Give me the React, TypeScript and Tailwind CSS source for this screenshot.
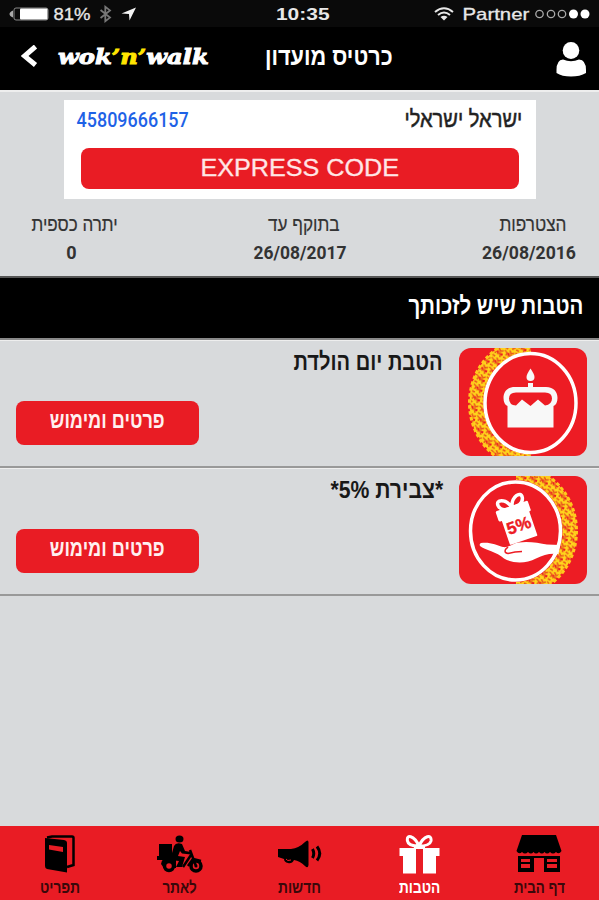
import React, { useLayoutEffect, useRef, useState } from "react";
import clsx from "clsx";

interface FitTextProps {
  width: number;
  className?: string;
  children: React.ReactNode;
}

// Condenses or stretches one line of text to a fixed width
const FitText: React.FC<FitTextProps> = ({ width, className, children }) => {
  const ref = useRef<HTMLSpanElement>(null);
  const [scale, setScale] = useState(1);

  useLayoutEffect(() => {
    if (ref.current) setScale(width / ref.current.offsetWidth);
  }, [width]);

  return (
    <span className="flex shrink-0 justify-center" style={{ width }} dir="ltr">
      <span className="shrink-0" style={{ transform: `scaleX(${scale})` }}>
        <span ref={ref} dir="auto" className={clsx("block whitespace-nowrap", className)}>
          {children}
        </span>
      </span>
    </span>
  );
};

const StatusBar = () => (
  <div className="flex h-[27px] items-center bg-[#0a0a0a] pt-px pr-[9px] pl-[9px] text-[#e8e8e8]">
    <div className="flex w-[267px] items-center">
      <svg width="40" height="14" viewBox="0 0 40 14">
        <path d="M4 3.500Q0.500 5 0.500 7T4 10.500Z" fill="#aaa" />
        <rect x="5" y="1" width="34" height="12" rx="2" fill="none" stroke="#888" />
        <rect x="11" y="1.500" width="27.500" height="11" rx="1" fill="#fff" />
      </svg>
      <div className="ml-[5px]">
        <FitText width={37} className="text-[17px] leading-[27px] [-webkit-text-stroke:0.3px_currentColor]">81%</FitText>
      </div>
      <svg width="13" height="18" viewBox="0 0 13 20" className="ml-2" fill="none" stroke="#777" strokeWidth="2">
        <path d="M1 5.500L11.500 14L6.300 18V2L11.500 6L1 14.500" />
      </svg>
      <svg width="16" height="14" viewBox="0 0 16 14" className="ml-[9px]">
        <path d="M15 0.500L0.500 6.500L8 7L8.500 13.500Z" fill="#f4f4f4" />
      </svg>
    </div>
    <FitText width={53} className="text-[17px] leading-[27px] font-bold">10:35</FitText>
    <div className="ml-auto flex items-center">
      <svg width="20" height="14" viewBox="0 0 20 14" fill="none" stroke="#e8e8e8" strokeWidth="2">
        <path d="M1 5Q10 -2.500 19 5M4 8Q10 3 16 8" />
        <path d="M6.500 10Q10 7.500 13.500 10L10 13.500Z" fill="#e8e8e8" stroke="none" />
      </svg>
      <div className="ml-2">
        <FitText width={67} className="text-[17px] leading-[27px] [-webkit-text-stroke:0.3px_currentColor]">Partner</FitText>
      </div>
      <svg width="56" height="12" viewBox="0 0 56 12" className="ml-[5px]">
        <g fill="none" stroke="#aaa" strokeWidth="1.300">
          <circle cx="5.500" cy="6" r="3.700" />
          <circle cx="17" cy="6" r="3.700" />
          <circle cx="28" cy="6" r="3.700" />
        </g>
        <circle cx="39.500" cy="6" r="4.500" fill="#fff" />
        <circle cx="51" cy="6" r="4.500" fill="#fff" />
      </svg>
    </div>
  </div>
);

const Header = () => (
  <header className="flex h-[63px] items-start bg-black pr-[12px] pl-[21px] text-white">
    <svg width="17" height="22" viewBox="0 0 17 22" className="mt-[18px]">
      <path d="M14.500 1.500L3.500 11L14.500 20" fill="none" stroke="#fff" strokeWidth="5" />
    </svg>
    <div className="ml-[20px] mt-[14px]">
      <FitText width={151} className="font-['DejaVu_Serif'] text-[21px] leading-[31px] font-black italic [-webkit-text-stroke:1px_currentColor]">
        wok<span className="text-[#ffe500]">’n’</span>walk
      </FitText>
    </div>
    <div className="ml-[56px] mt-[14px]">
      <FitText width={128} className="text-[25px] leading-[31px] font-bold">כרטיס מועדון</FitText>
    </div>
    <svg width="31" height="35" viewBox="0 0 31 35" className="ml-auto mt-[15px]" fill="#fff">
      <ellipse cx="15" cy="8.500" rx="8.300" ry="8.500" />
      <path d="M0.500 28Q0.500 18 7 17.500Q15 21 23 17.500Q30 18 30 28V31Q24 34.500 15 34.500T0.500 31Z" />
    </svg>
  </header>
);

const DETAILS = [
  { label: "הצטרפות", labelWidth: 67, value: "26/08/2016", valueWidth: 94, box: "w-[94px]", shift: "pl-[7px]", valueShift: "" },
  { label: "בתוקף עד", labelWidth: 72, value: "26/08/2017", valueWidth: 93, box: "w-[94px]", shift: "pl-[8px]", valueShift: "" },
  { label: "יתרה כספית", labelWidth: 86, value: "0", valueWidth: 10, box: "w-[86px]", shift: "", valueShift: "pr-[7px]" },
];

const MemberCard = () => (
  <section className="h-[186px] border-t-2 border-[#eeeeee] pt-2">
    <div className="mx-auto h-[99px] w-[472px] bg-white px-[13px] pt-[4px]">
      <div className="flex h-[44px] justify-between text-[#222]">
        <FitText width={118} className="text-[23px] leading-[31px] [-webkit-text-stroke:0.5px_currentColor]">ישראל ישראלי</FitText>
        <FitText width={112} className="font-['Roboto'] text-[21px] leading-[33px] font-medium text-[#1e62e6]">45809666157</FitText>
      </div>
      <button className="mx-1 flex h-[41px] w-[438px] items-center justify-center rounded-lg bg-[#e91c24] text-[#ffe6e6]">
        <FitText width={199} className="text-[23px] leading-[41px] [-webkit-text-stroke:0.3px_currentColor]">EXPRESS CODE</FitText>
      </button>
    </div>
    <div className="flex justify-between pt-[11px] pr-[23px] pl-[32px] text-[#333]">
      {DETAILS.map((d) => (
        <div key={d.label} className={clsx("flex flex-col items-center", d.box)}>
          <div className={d.shift}>
            <FitText width={d.labelWidth} className="text-[20px] leading-[28px] [-webkit-text-stroke:0.2px_currentColor]">{d.label}</FitText>
          </div>
          <div className={d.valueShift}>
            <FitText width={d.valueWidth} className="font-['Roboto'] text-[18px] leading-[30px] font-bold">{d.value}</FitText>
          </div>
        </div>
      ))}
    </div>
  </section>
);

const Ornament = ({ id, cx }: { id: string; cx: number }) => (
  <>
    <defs>
      <pattern id={id} width="11" height="10" patternUnits="userSpaceOnUse" patternTransform="rotate(14)">
        <rect width="11" height="10" fill="#ffd51c" />
        <path d="M1 1L4 3L3 6M6 0L8 3L11 2M5 6L8 5L9 9M1 8L4 9" fill="none" stroke="#e8541c" strokeWidth="1.500" />
        <circle cx="5.500" cy="4" r="1.200" fill="#ed1c24" />
        <circle cx="10" cy="6" r="1.300" fill="#ed1c24" />
      </pattern>
    </defs>
    <ellipse cx={cx} cy="55" rx="54" ry="58" fill="none" stroke={`url(#${id})`} strokeWidth="14" />
    <ellipse cx={cx} cy="55" rx="61" ry="65" fill="none" stroke="#ffc91c" strokeWidth="3" strokeDasharray="3.500 2.500" />
  </>
);

const BirthdayIcon = () => (
  <svg width="128" height="108" viewBox="0 0 128 108" className="rounded-xl bg-[#ed1c24]">
    <clipPath id="left-half">
      <rect width="72" height="108" />
    </clipPath>
    <g clipPath="url(#left-half)">
      <Ornament id="lace-left" cx={71.5} />
    </g>
    <ellipse cx="71.500" cy="55" rx="45.500" ry="49.500" fill="#ed1c24" stroke="#fff" strokeWidth="3.500" />
    <g fill="#f8f8f8">
      <path d="M71.500 20.500Q67.500 26.500 67.500 29Q67.500 33 71.500 33T75.500 29Q75.500 26.500 71.500 20.500Z" />
      <rect x="69" y="35" width="5" height="6" />
      <path d="M56 39H87C95 39 98.500 44 98.500 50C98.500 54 97 57 94.500 58V79.500H48.500V58C46 57 44.500 54 44.500 50C44.500 44 48 39 56 39Z" />
    </g>
    <path d="M57 44.500H86Q93 44.500 93 50.500Q93 56.500 86 57.500L79 51.500L71.500 58L63 51.500L57 57.500Q50 57 50 50.500Q50 44.500 57 44.500Z" fill="#ed1c24" />
  </svg>
);

const CashbackIcon = () => (
  <svg width="128" height="108" viewBox="0 0 128 108" className="rounded-xl bg-[#ed1c24]">
    <clipPath id="right-half">
      <rect x="57" width="71" height="108" />
    </clipPath>
    <g clipPath="url(#right-half)">
      <Ornament id="lace-right" cx={56.5} />
    </g>
    <ellipse cx="56.500" cy="55" rx="45" ry="49" fill="#ed1c24" stroke="#fff" strokeWidth="3.500" />
    <g transform="translate(2.500 2.500) rotate(-19 56 45)">
      <path d="M56 28C53 17 42.500 15 43.500 22C44.500 27.500 50 29 56 28C62 29 68 27.500 69 22C70 15 59 17 56 28Z" fill="none" stroke="#fff" strokeWidth="3.500" />
      <rect x="39" y="26.500" width="34" height="11" rx="1.500" fill="#fff" />
      <rect x="42" y="35" width="29" height="28" rx="1" fill="#fff" />
      <text x="56.500" y="53" direction="ltr" textAnchor="middle" fontFamily="Liberation Sans" fontSize="17" fontWeight="bold" fill="#ed1c24" stroke="#ed1c24" strokeWidth="0.400">5%</text>
    </g>
    <path d="M22 67C30 65.500 38 69 44 71C50 72 54 67 60 66.500C69 65 80 67 88 68.500L101 69L99.500 78C90 77 85 79 77 82.500C67 88 53 87.500 45 82.500C38 76 26 74 21 70Q20 68 22 67Z" fill="#fff" />
    <path d="M63 75.500Q56 75.500 49 77.500Q45 77 46.500 73.500L49 71" fill="none" stroke="#ed1c24" strokeWidth="1.500" />
  </svg>
);

const BENEFITS = [
  { title: "הטבת יום הולדת", titleWidth: 149, icon: <BirthdayIcon /> },
  { title: "*צבירת 5%*", titleWidth: 113, icon: <CashbackIcon /> },
];

const Benefits = () => (
  <section>
    <h2 className="flex h-[64px] items-start border-t-2 border-b-2 border-t-[#555] border-b-[#888] bg-black pt-[12px] pr-4 text-white">
      <FitText width={175} className="text-[25px] leading-[31px] font-bold">הטבות שיש לזכותך</FitText>
    </h2>
    {BENEFITS.map((b) => (
      <div key={b.title} className="flex h-[128px] border-t border-b-2 border-t-[#eee] border-b-[#999] pt-[7px] pr-3">
        {b.icon}
        <div className="mr-[16px]">
          <FitText width={b.titleWidth} className="text-[24px] leading-[27px] font-bold text-[#181818]">{b.title}</FitText>
        </div>
        <button className="mt-[53px] mr-auto ml-4 flex h-[44px] w-[183px] justify-center rounded-lg bg-[#e91c24] pt-[4px] pl-[2px] text-[#fff0f0]">
          <FitText width={115} className="-ml-[3px] text-[23px] leading-[31px] font-bold">פרטים ומימוש</FitText>
        </button>
      </div>
    ))}
  </section>
);

const StoreIcon = () => (
  <svg width="46" height="38" viewBox="0 0 46 38">
    <path d="M6 0H40L45.500 16Q43 20 40 17Q37 20 34 17Q31 20 28.500 17Q26 20 23 17Q20 20 17.500 17Q15 20 12 17Q9 20 6 17Q3 20 0.500 16Z" />
    <path fillRule="evenodd" d="M2 21H44V37H28V23H18V37H2ZM5 24V27H14V24ZM5 29V33H14V29ZM31 24V27H41V24ZM31 29V33H41V29Z" />
  </svg>
);

const GiftIcon = () => (
  <svg width="41" height="39" viewBox="0 0 41 39" fill="#fff">
    <path d="M20 11C15 0 7 -1 8.500 6C9 10 15 11 20 11C25 11 31 10 32 6C33 -1 25 0 20 11Z" fill="none" stroke="#fff" strokeWidth="3" />
    <path d="M0.500 13H17V38.500H4V21H0.500ZM24 13H40.500V21H37V38.500H24Z" />
    <path d="M15 11H26V14H15Z" />
  </svg>
);

const NewsIcon = () => (
  <svg width="46" height="38" viewBox="0 0 46 38">
    <path d="M28 7Q31 4 31.500 7V30Q31 34 28 31Q23 26 17 25Q15 29 11 28Q7 27 7 24L1 22V14L14 14Q22 13 28 7Z" />
    <path d="M9 24Q10 26.500 14 25" stroke="#e91c24" fill="none" />
    <path d="M35.500 14Q38 18.500 35.500 23M40 11.500Q45.500 18.500 40 25.500" fill="none" stroke="#000" strokeWidth="3" />
  </svg>
);

const DeliveryIcon = () => (
  <svg width="46" height="38" viewBox="0 0 46 38">
    <ellipse cx="22.500" cy="4" rx="4" ry="3.500" />
    <path d="M2 9H15V22H2ZM0 21H16V25H0Z" />
    <path d="M17 11Q19 7 25 9L28 16L34 17V19.500L25 18.500L23 16L21 21L28 22L25 32H19L22 26L13 25Z" />
    <path d="M4 29Q5 22 13 22L19 25V33H7Z" />
    <circle cx="12" cy="31" r="4.500" fill="#e91c24" stroke="#000" strokeWidth="3.500" />
    <circle cx="39" cy="31" r="5" fill="#e91c24" stroke="#000" strokeWidth="3.500" />
    <path d="M33 15L39 31M34 20L26 32M31 31L36 24L44 26" fill="none" stroke="#000" strokeWidth="2.500" />
    <circle cx="39" cy="31" r="1.500" />
  </svg>
);

const MenuIcon = () => (
  <svg width="32" height="38" viewBox="0 0 32 38">
    <path d="M3 2.500L8 1.500H28Q29.500 1.500 29.500 3V30L23 32" fill="none" stroke="#000" strokeWidth="2.500" />
    <path d="M1 3L20 5Q23 5.500 23 8V37.500L3 34Q1 33.500 1 31Z" />
    <path d="M5 10L19 12V17L5 14.500Z" fill="#e91c24" />
  </svg>
);

const NAV = [
  { label: "דף הבית", width: 51, icon: <StoreIcon /> },
  { label: "הטבות", width: 41, icon: <GiftIcon />, active: true },
  { label: "חדשות", width: 43, icon: <NewsIcon /> },
  { label: "לאתר", width: 34, icon: <DeliveryIcon /> },
  { label: "תפריט", width: 40, icon: <MenuIcon /> },
];

const BottomNav = () => (
  <nav className="mt-auto grid h-[74px] grid-cols-5 bg-[#e91c24] pt-[9px]">
    {NAV.map((item) => (
      <a key={item.label} className={clsx("flex flex-col items-center", item.active ? "text-white" : "text-[#3a080a]")}>
        <span className="flex h-[41px]">{item.icon}</span>
        <FitText width={item.width} className="text-[17px] leading-[24px] font-bold">{item.label}</FitText>
      </a>
    ))}
  </nav>
);

export default function App() {
  return (
    <div className="flex h-[900px] w-[599px] flex-col overflow-hidden bg-[#d8dadc] font-['Liberation_Sans',sans-serif]">
      <StatusBar />
      <Header />
      <main dir="rtl" className="flex flex-1 flex-col">
        <MemberCard />
        <Benefits />
        <BottomNav />
      </main>
    </div>
  );
}
